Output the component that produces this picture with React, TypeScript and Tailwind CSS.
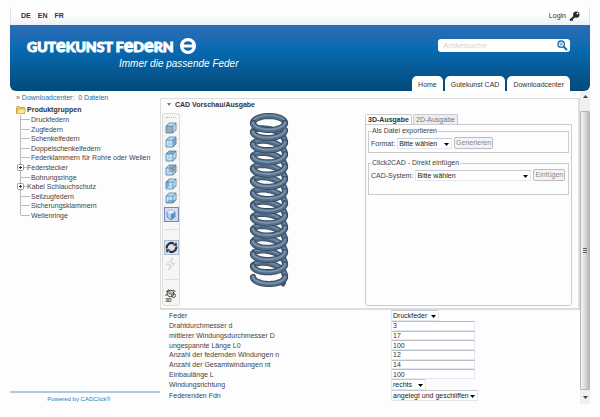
import React from "react";

const SANS = "font-['Liberation_Sans',Arial,sans-serif]";

/* ---------- drawings ---------- */

function helix(y0: number, ry: number, pitch: number, from: number, to: number) {
  const pts: string[] = [];
  const steps = 24;
  for (let i = 0; i <= steps; i++) {
    const t = from + ((to - from) * i) / steps;
    const x = 20 + 16 * Math.cos(t * Math.PI * 2);
    const y = y0 + ry * Math.sin(t * Math.PI * 2) + pitch * t;
    pts.push(`${x.toFixed(2)},${y.toFixed(2)}`);
  }
  return pts.join(" ");
}

function Wire({ points, back }: { points: string; back?: boolean }) {
  return (
    <g fill="none" strokeLinecap="round" strokeLinejoin="round">
      <polyline points={points} stroke={back ? "#3b4f66" : "#34475d"} strokeWidth="6.2" />
      <polyline points={points} stroke={back ? "#4f6883" : "#526c89"} strokeWidth="4.6" />
      <polyline
        points={points}
        stroke={back ? "#6f88a3" : "#7b93ad"}
        strokeWidth="1.8"
        transform="translate(0 -0.6)"
      />
    </g>
  );
}

function Spring() {
  const turns = Array.from({ length: 12 }, (_, i) => 15 + i * 12.2);
  return (
    <svg width="40" height="178" viewBox="0 0 40 178" role="img" aria-label="Druckfeder">
      <Wire points={helix(10, 7, 0, 0.5, 1)} back />
      {turns.map((y) => (
        <Wire key={y} points={helix(y - 6.2, 8, 20.4, 0.5, 1)} back />
      ))}
      <path d="M35 164v6l-2 3" stroke="#3d5470" strokeWidth="4" fill="none" />
      {turns.map((y) => (
        <Wire key={y} points={helix(y + 2, 7, 4, 0, 0.5)} />
      ))}
      <Wire points={helix(10, 7, 0, 0, 0.5)} />
      <Wire points={helix(164, 7, 0, 0, 0.5)} />
    </svg>
  );
}

const FACES: Record<string, string> = {
  front: "M1 4h7v7H1z",
  back: "M4 1h7v7H4z",
  top: "M1 4l3-3h7L8 4z",
  right: "M8 4l3-3v7l-3 3z",
  left: "M1 4l3-3v7l-3 3z",
  bottom: "M1 11l3-3h7l-3 3z",
};

function Cube({ face }: { face: string }) {
  return (
    <svg width="12" height="12" viewBox="0 0 12 12">
      <path d="M1 4l3-3h7v7l-3 3H1z" fill="#c5e2f6" />
      <path d={FACES[face]} fill={face === "front" || face === "back" ? "#a3a9b0" : "#8ba9c4"} />
      <path
        d="M1 4h7v7H1zM1 4l3-3h7L8 4M11 1v7l-3 3"
        fill="none"
        stroke="#4a80ac"
        strokeWidth="0.8"
      />
      <path d="M4 1v7h7M4 8l-3 3" fill="none" stroke="#7fb0d6" strokeWidth="0.5" />
    </svg>
  );
}

function IsoCube() {
  return (
    <svg width="12" height="12" viewBox="0 0 12 12">
      <path d="M6 1l4 2v5l-4 3-4-3V3z" fill="#a9d2ee" stroke="#4c86b4" strokeWidth="0.8" />
      <path d="M2 3l4 2 4-2-4-2z" fill="#e3f3fd" />
      <path d="M6 5v6l4-3V3z" fill="#5d93bd" />
    </svg>
  );
}

function RefreshIcon() {
  return (
    <svg width="13" height="13" viewBox="0 0 13 13">
      <g fill="none" stroke="#303030" strokeWidth="2.2">
        <path d="M1.800 7.500A4.700 4.700 0 0 1 9 2.800" />
        <path d="M11.200 5.500A4.700 4.700 0 0 1 4 10.200" />
      </g>
      <path d="M8 4.800h4L11.300 1zM5 8.200H1L1.700 12z" fill="#303030" />
    </svg>
  );
}

function BoltIcon() {
  return (
    <svg width="12" height="14" viewBox="0 0 12 14">
      <path d="M7.500 1L1.500 7.500l4 .5L3.500 13l6.500-6.500-4-.5z" fill="#f1f1f1" stroke="#c9c9c9" strokeWidth="0.8" />
    </svg>
  );
}

function GearView() {
  return (
    <svg width="12" height="10" viewBox="0 0 12 10" fill="none" stroke="#333">
      <circle cx="5.500" cy="4.500" r="3.300" strokeWidth="0.9" />
      <circle cx="5" cy="4" r="1.300" strokeWidth="0.7" />
      <circle cx="8.500" cy="6.500" r="2" strokeWidth="0.8" />
      <path d="M1 3l3-2.500M8 1l2.500 1.500M1.500 5L.5 7" strokeWidth="0.9" />
    </svg>
  );
}

function KeyIcon() {
  return (
    <svg width="11" height="11" viewBox="0 0 11 11">
      <path d="M6 5L1 9.500" stroke="#2a2a2a" strokeWidth="2" />
      <path d="M2.500 8l1.500 1.600" stroke="#2a2a2a" strokeWidth="1.200" />
      <circle cx="7.300" cy="3.600" r="3.200" fill="#2a2a2a" />
      <circle cx="8.500" cy="2.500" r="0.9" fill="#fff" />
    </svg>
  );
}

function SearchIcon() {
  return (
    <svg width="11" height="11" viewBox="0 0 11 11" fill="none" stroke="#1769b3">
      <circle cx="4.200" cy="4.200" r="3.200" strokeWidth="1.300" />
      <circle cx="4.200" cy="4.200" r="1.100" strokeWidth="0.7" />
      <path d="M6.600 6.600L10 10" strokeWidth="1.900" />
    </svg>
  );
}

function LogoMark() {
  return (
    <svg width="16" height="16" viewBox="0 0 16 16">
      <circle cx="8" cy="8" r="8" fill="#fff" />
      <path d="M3.600 6.600a4.600 4.600 0 0 1 8.800 0zM3.600 9.400a4.600 4.600 0 0 0 8.800 0z" fill="#0c69ad" />
    </svg>
  );
}

function FolderIcon() {
  return (
    <svg width="10" height="8" viewBox="0 0 10 8">
      <path d="M.5 7V1.300L1.300.5h2.200l1 1h4V7z" fill="#f3cf57" stroke="#b58a1c" strokeWidth="0.7" />
      <path d="M.7 7.500L2.300 3h7.400L8.300 7.500z" fill="#ffe88f" stroke="#c39a2a" strokeWidth="0.6" />
    </svg>
  );
}

/* ---------- form parts ---------- */

function Select({ value, width, id }: { value: string; width: string; id: string }) {
  return (
    <span className={`relative inline-flex ${width}`}>
      <select
        id={id}
        className="h-[11px] w-full appearance-none border border-[#e3e8ee] border-t-[#c4cad3] bg-white pl-px text-[7px] leading-[9px] text-[#222]"
      >
        <option>{value}</option>
      </select>
      <svg className="pointer-events-none absolute top-[5px] right-[3px]" width="5" height="3" viewBox="0 0 5 3">
        <path d="M0 0h5L2.500 3z" fill="#000" />
      </svg>
    </span>
  );
}

function Field({ id, label, children }: { id: string; label: string; children: React.ReactNode }) {
  return (
    <div className="flex items-center">
      <label htmlFor={id} className="w-[222px] shrink-0">
        {label}
      </label>
      {children}
    </div>
  );
}

const TREE: { name: string; open?: boolean }[] = [
  { name: "Druckfedern" },
  { name: "Zugfedern" },
  { name: "Schenkelfedern" },
  { name: "Doppelschenkelfedern" },
  { name: "Federklammern für Rohre oder Wellen" },
  { name: "Federstecker", open: false },
  { name: "Bohrungsringe" },
  { name: "Kabel Schlauchschutz", open: false },
  { name: "Seilzugfedern" },
  { name: "Sicherungsklammern" },
  { name: "Wellenringe" },
];

const VALUES = [
  ["Drahtdurchmesser d", "3"],
  ["mittlerer Windungsdurchmesser D", "17"],
  ["ungespannte Länge L0", "100"],
  ["Anzahl der federnden Windungen n", "12"],
  ["Anzahl der Gesamtwindungen nt", "14"],
  ["Einbaulänge L", "100"],
];

function PlusBox() {
  return (
    <svg className="shrink-0" width="7" height="7" viewBox="0 0 7 7">
      <rect x="0.500" y="0.500" width="6" height="6" rx="1" fill="#fff" stroke="#999" />
      <path d="M2 3.500h3M3.500 2v3" stroke="#333" strokeWidth="1" />
    </svg>
  );
}

function TreeRow({ name, open, last }: { name: string; open?: boolean; last: boolean }) {
  const branch = open !== undefined;
  return (
    <li className="flex items-center">
      <span className="flex w-[4px] shrink-0 flex-col self-stretch">
        <span className="flex-1 border-r border-[#bbb]" />
        <span className={`flex-1 ${last ? "" : "border-r border-[#bbb]"}`} />
      </span>
      {branch ? (
        <button aria-label={`${name} öffnen`} className="-ml-[4px] flex shrink-0">
          <PlusBox />
        </button>
      ) : null}
      <span className={`h-px shrink-0 bg-[#bbb] ${branch ? "w-[3px]" : "mr-px w-[9px]"}`} />
      <a href="#" className="whitespace-nowrap">
        {name}
      </a>
    </li>
  );
}

function Sidebar() {
  return (
    <aside className="flex w-[150px] shrink-0 flex-col">
      <p className="mt-[2px] pl-[6px] text-[7px] leading-[9px] text-[#2a6ea5]">
        <span className="text-[#666]">»</span>{" "}
        <a href="#" className="whitespace-pre">
          Downloadcenter:{"  "}0 Dateien
        </a>
      </p>
      <div className="mt-[3px] flex h-[10px] items-center gap-px pl-[6px] text-[7px] font-bold text-[#333]">
        <FolderIcon />
        Produktgruppen
      </div>
      <ul className="ml-[7px] grid h-[105px] auto-rows-fr text-[7px] leading-[9px] text-[#444]">
        {TREE.map((t, i) => (
          <TreeRow key={t.name} {...t} last={i === TREE.length - 1} />
        ))}
      </ul>
      <div className="mt-auto mb-[13px] border-t-2 border-[#a9cbe4] pt-[2px] pr-[12px] text-center text-[6px] leading-[9px] text-[#2a7bb8]">
        <a href="#">Powered by CADClick®</a>
      </div>
    </aside>
  );
}

function Toolbar() {
  return (
    <div className="flex h-[193px] w-[18px] shrink-0 flex-col items-center rounded-[3px] border border-[#ddd] bg-[#f6f6f4] pt-[3px]">
      <span className="w-[10px] border-t border-dotted border-[#bbb]" />
      <div className="mt-[4px] grid grid-rows-6 gap-[2px]">
        {["front", "right", "top", "back", "left", "bottom"].map((f) => (
          <button key={f} aria-label={f} className="size-[12px]">
            <Cube face={f} />
          </button>
        ))}
      </div>
      <button aria-label="iso" className="mt-[3px] flex size-[15px] items-center justify-center border border-[#7c80bd] bg-[#d6dcea]">
        <IsoCube />
      </button>
      <span className="mt-[7px] w-[14px] border-t border-[#ddd]" />
      <button aria-label="refresh" className="mt-[10px] flex size-[15px] shrink-0 items-center justify-center border border-[#a9bdd6] bg-[#dde3ec]">
        <RefreshIcon />
      </button>
      <button aria-label="render" className="mt-[2px]">
        <BoltIcon />
      </button>
      <span className="mt-[8px] w-[14px] border-t border-[#ddd]" />
      <button aria-label="3D" className="mt-[9px] flex flex-col items-center">
        <GearView />
        <span className="-mt-px mr-[5px] text-[5px] leading-[5px] font-bold">3D</span>
      </button>
    </div>
  );
}

function OutputPanel() {
  const legend = "px-px text-[7px] leading-[8px]";
  const btn =
    "h-[12px] rounded-[2px] border border-[#bbb] bg-[#f4f4f4] text-[7px] leading-[10px] text-[#888]";
  return (
    <div className="flex w-[207px] shrink-0 flex-col pt-px text-[7px] text-[#444]">
      <div className="flex h-[10px] gap-px">
        <button className="w-[47px] rounded-t-[2px] border border-b-0 border-[#ccc] bg-white font-bold leading-[9px] text-[#333]">
          3D-Ausgabe
        </button>
        <button className="w-[45px] rounded-t-[2px] border border-b-0 border-[#ccc] bg-[#eee] leading-[9px] text-[#777]">
          2D-Ausgabe
        </button>
      </div>
      <div className="flex h-[182px] flex-col rounded-b-[3px] border border-[#ccc] px-[2px] pt-[2px]">
        <fieldset className="h-[26px] border border-[#ccc] px-[2px]">
          <legend className={legend}>Als Datei exportieren</legend>
          <div className="flex items-center gap-[2px] pt-[2px]">
            <label htmlFor="format">Format:</label>
            <Select id="format" value="Bitte wählen" width="w-[55px]" />
            <button className={`${btn} w-[39px]`}>Generieren</button>
          </div>
        </fieldset>
        <fieldset className="mt-[6px] h-[36px] border border-[#ccc] px-[2px]">
          <legend className={legend}>Click2CAD - Direkt einfügen</legend>
          <div className="flex items-center gap-[2px] pt-[2px]">
            <label htmlFor="cad">CAD-System:</label>
            <Select id="cad" value="Bitte wählen" width="w-[116px]" />
            <button className={`${btn} w-[32px]`}>Einfügen</button>
          </div>
        </fieldset>
      </div>
    </div>
  );
}

function Scrollbar() {
  return (
    <div className="flex h-[313px] w-[10px] shrink-0 flex-col bg-[#f0f0f0]">
      <button aria-label="up" className="flex h-[20px] items-start justify-center pt-[4px]">
        <svg width="5" height="3" viewBox="0 0 5 3">
          <path d="M0 3h5L2.500 0z" fill="#444" />
        </svg>
      </button>
      <div className="flex flex-1 flex-col items-center justify-center gap-px rounded-[1px] border border-[#b4b4b4] bg-linear-to-r from-[#f4f4f4] via-[#dcdcdc] to-[#b8b8b8]">
        <span className="h-px w-[4px] bg-[#666]" />
        <span className="h-px w-[4px] bg-[#666]" />
        <span className="h-px w-[4px] bg-[#666]" />
      </div>
      <button aria-label="down" className="flex h-[14px] items-center justify-center">
        <svg width="5" height="3" viewBox="0 0 5 3">
          <path d="M0 0h5L2.500 3z" fill="#444" />
        </svg>
      </button>
    </div>
  );
}

function Header() {
  const big = "text-[18px]";
  return (
    <header>
      <div className="flex h-[18px] items-center justify-between border-x border-[#e2e2e2] bg-linear-to-b from-white from-40% to-[#eaf0f5] pr-[9px] pl-[10px] text-[7px] text-[#333]">
        <nav className="flex gap-[7px] font-bold">
          <a href="#">DE</a>
          <a href="#">EN</a>
          <a href="#">FR</a>
        </nav>
        <a href="#" className="flex items-center gap-[3px]">
          Login
          <KeyIcon />
        </a>
      </div>
      <div className="flex h-[66px] justify-between rounded-b-[6px] bg-linear-to-b from-[#2b6cb4] via-[#086bb2] via-35% to-[#044a7b] pr-[20px] pl-[17px]">
        <div className="pt-[12px]">
          <div className="flex h-[18px] items-center gap-[6px]">
            <h1 className="font-['Lato',sans-serif] text-[14px] leading-[18px] font-black whitespace-nowrap text-white [-webkit-text-stroke:1px_white]">
              GUT<span className={big}>e</span>KUNST F<span className={big}>e</span>D
              <span className={big}>e</span>RN
            </h1>
            <LogoMark />
          </div>
          <p className="mt-[3px] ml-[92px] text-[10px] leading-[12px] whitespace-nowrap text-white italic">
            Immer die passende Feder
          </p>
        </div>
        <div className="flex flex-col items-end justify-between pt-[14px]">
          <form className="flex h-[13px] w-[132px] items-center rounded-[3px] bg-white pr-[2px] pl-[5px]">
            <input
              aria-label="Artikelsuche"
              placeholder="Artikelsuche"
              className="min-w-0 flex-1 text-[8px] leading-[11px] italic placeholder:text-[#d3d3d3]"
            />
            <button aria-label="Suchen">
              <SearchIcon />
            </button>
          </form>
          <nav className="flex gap-[2px] text-[7px] leading-[18px] text-[#333] [&>a]:h-[15px] [&>a]:rounded-t-[5px] [&>a]:bg-white [&>a]:px-[6px]">
            <a href="#">Home</a>
            <a href="#">Gutekunst CAD</a>
            <a href="#">Downloadcenter</a>
          </nav>
        </div>
      </div>
    </header>
  );
}

export default function App() {
  return (
    <div className={`flex min-h-screen flex-col bg-[#fdfdfd] px-[10px] pt-[7px] ${SANS}`}>
      <Header />
      <div className="flex flex-1">
        <Sidebar />
        <main className="min-w-0 flex-1 pt-[7px] text-[7px] leading-[9px] text-[#444]">
          <section className="border border-r-2 border-b-2 border-[#ddd]">
            <h2 className="flex h-[14px] items-center gap-[4px] pb-[3px] pl-[6px] text-[7px] font-bold text-[#333]">
              <svg width="4" height="3" viewBox="0 0 4 3">
                <path d="M0 0h4L2 3z" fill="#777" />
              </svg>
              CAD Vorschau/Ausgabe
            </h2>
            <div className="flex pr-[6px] pb-[2px] pl-px">
              <Toolbar />
              <div className="flex min-w-0 flex-1 justify-center pr-[7px]">
                <Spring />
              </div>
              <OutputPanel />
            </div>
          </section>
          <form className="pl-[9px]">
            <Field id="feder" label="Feder">
              <Select id="feder" value="Druckfeder" width="w-[48px]" />
            </Field>
            <div className="grid h-[58px] grid-rows-6">
              {VALUES.map(([label, value], i) => (
                <Field key={label} id={`v${i}`} label={label}>
                  <input
                    id={`v${i}`}
                    defaultValue={value}
                    className="h-full w-[84px] border border-[#e3e8f2] border-t-[#b9bfca] bg-white px-px text-[7px] leading-[8px] text-[#333]"
                  />
                </Field>
              ))}
            </div>
            <Field id="richtung" label="Windungsrichtung">
              <Select id="richtung" value="rechts" width="w-[35px]" />
            </Field>
            <Field id="enden" label="Federenden Fdn">
              <Select id="enden" value="angelegt und geschliffen" width="w-[87px]" />
            </Field>
          </form>
        </main>
        <Scrollbar />
      </div>
    </div>
  );
}
